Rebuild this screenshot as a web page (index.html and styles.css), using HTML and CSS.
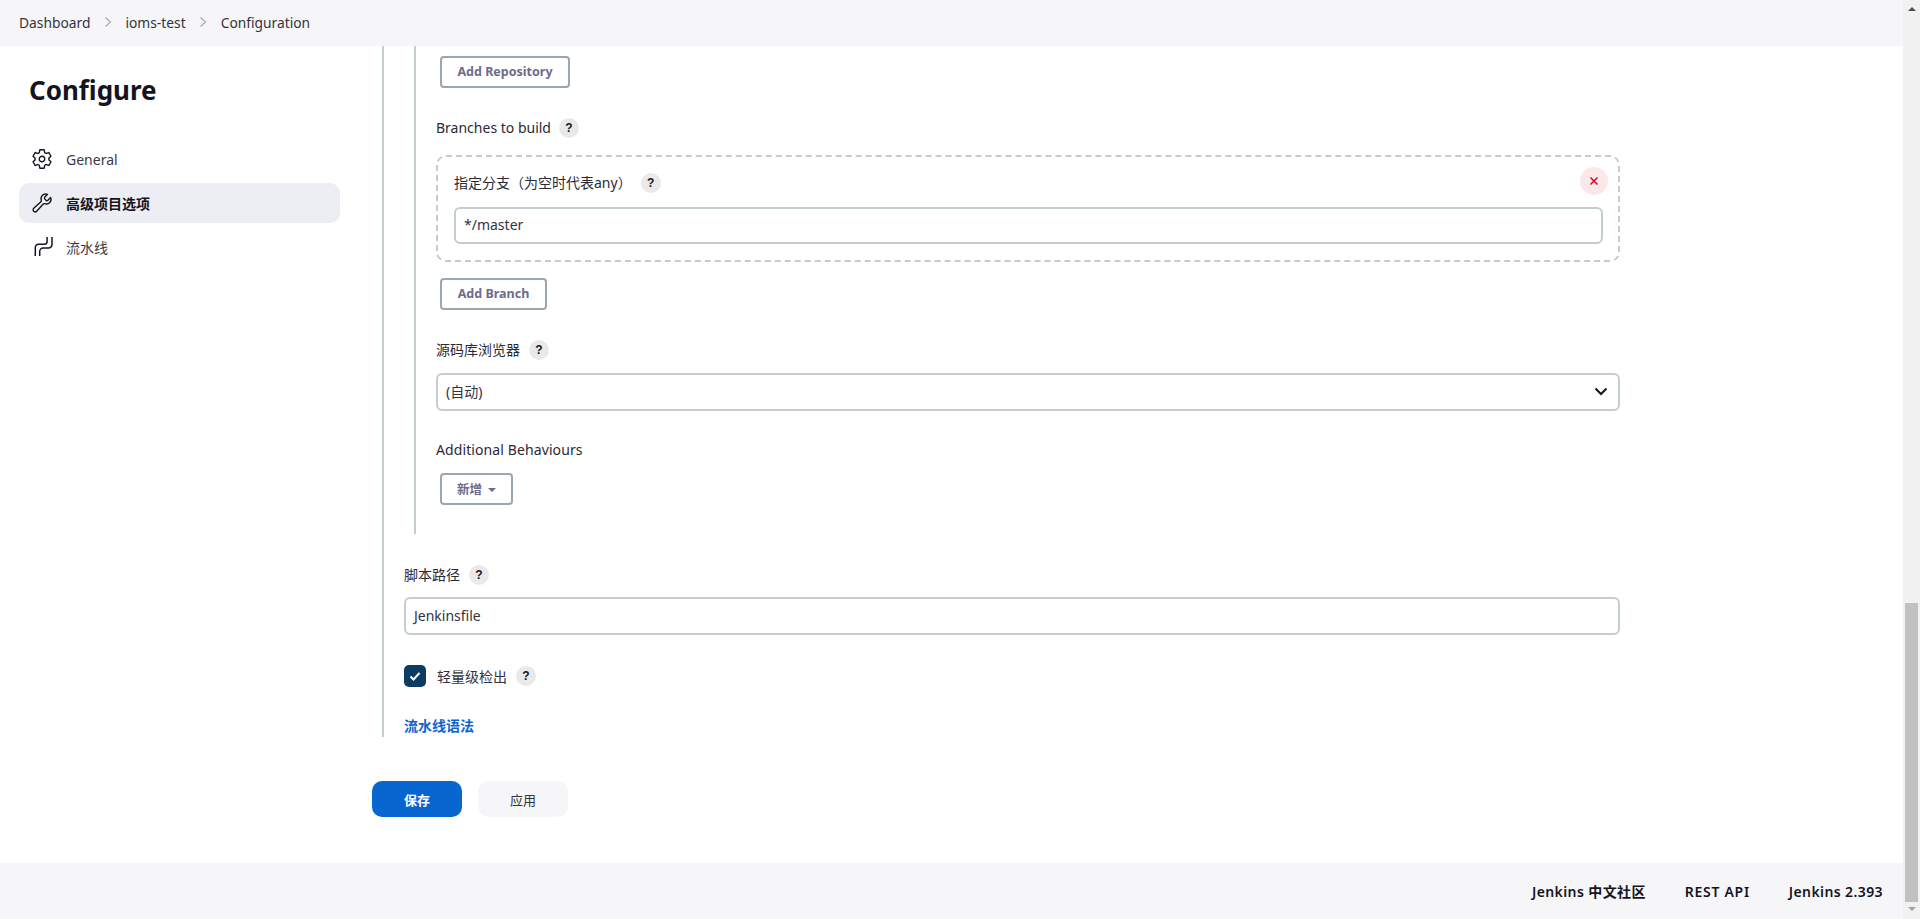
FILE: index.html
```html
<!DOCTYPE html>
<html lang="zh">
<head>
<meta charset="utf-8">
<title>Configuration</title>
<link rel="stylesheet" href="styles.css">
</head>
<body>
<div class="viewport">
  <div class="page">
    <nav class="crumbs">
      <a>Dashboard</a>
      <svg class="sep" viewBox="0 0 8 12"><path d="M1.5 1.5 6.5 6l-5 4.500"/></svg>
      <a>ioms-test</a>
      <svg class="sep" viewBox="0 0 8 12"><path d="M1.5 1.5 6.5 6l-5 4.500"/></svg>
      <a>Configuration</a>
    </nav>
    <div class="layout">
      <aside class="side">
        <h1 class="side-title">Configure</h1>
        <ul class="side-list">
          <li class="side-item">
            <svg class="side-icon" viewBox="0 0 512 512"><path d="M262.29 192.31a64 64 0 1057.4 57.4 64.13 64.13 0 00-57.4-57.4zM416.39 256a154.34 154.34 0 01-1.53 20.79l45.21 35.46a10.81 10.81 0 012.45 13.75l-42.77 74a10.81 10.81 0 01-13.14 4.59l-44.9-18.08a16.11 16.11 0 00-15.17 1.75A164.48 164.48 0 01325 400.8a15.94 15.94 0 00-8.82 12.14l-6.73 47.89a11.08 11.08 0 01-10.68 9.17h-85.54a11.11 11.11 0 01-10.69-8.87l-6.72-47.82a16.07 16.07 0 00-9-12.22 155.3 155.3 0 01-21.46-12.57 16 16 0 00-15.11-1.71l-44.89 18.07a10.81 10.81 0 01-13.14-4.58l-42.77-74a10.8 10.8 0 012.45-13.75l38.21-30a16.05 16.05 0 006-14.08c-.36-4.17-.58-8.33-.58-12.5s.21-8.27.58-12.35a16 16 0 00-6.07-13.94l-38.19-30A10.81 10.81 0 0149.48 186l42.77-74a10.81 10.81 0 0113.14-4.59l44.9 18.08a16.11 16.11 0 0015.17-1.75A164.48 164.48 0 01187 111.2a15.94 15.94 0 008.82-12.14l6.73-47.89A11.08 11.08 0 01213.23 42h85.54a11.11 11.11 0 0110.69 8.87l6.72 47.82a16.07 16.07 0 009 12.22 155.3 155.3 0 0121.46 12.57 16 16 0 0015.11 1.71l44.89-18.07a10.81 10.81 0 0113.14 4.58l42.77 74a10.8 10.8 0 01-2.45 13.75l-38.21 30a16.05 16.05 0 00-6.05 14.08c.33 4.14.55 8.3.55 12.47z"/></svg>
            <span>General</span>
          </li>
          <li class="side-item active">
            <svg class="side-icon" viewBox="0 0 512 512"><path d="M393.87 190a32.1 32.1 0 01-45.25 0l-26.57-26.57a32.09 32.09 0 010-45.26L382.19 58a1 1 0 00-.3-1.64c-38.82-16.64-89.15-8.16-121.11 23.57-30.58 30.35-32.32 76-21.12 115.84a31.93 31.93 0 01-9.06 32.08L64 380a48.17 48.17 0 1068 68l153.86-167a31.93 31.93 0 0131.6-9.13c39.54 10.59 84.54 8.6 114.72-21.19 32.49-32 39.5-88.56 23.75-120.93a1 1 0 00-1.6-.26z"/></svg>
            <span>高级项目选项</span>
          </li>
          <li class="side-item">
            <svg class="side-icon pipe" viewBox="0 0 22 22"><path d="M4.300 20V11.500a3.200 3.200 0 0 1 3.200-3.200h5.800a2.800 2.800 0 0 0 2.800-2.800V1M8.700 20v-4.500a3.500 3.500 0 0 1 3.500-3.500h5.300a3.500 3.500 0 0 0 3.500-3.500V1"/></svg>
            <span>流水线</span>
          </li>
        </ul>
      </aside>
      <main class="main">
        <section class="outer">
          <div class="inner">
            <button class="btn-outline btn-repo">Add Repository</button>
            <div class="label label-branches"><span>Branches to build</span><i class="help">?</i></div>
            <div class="repeat">
              <button class="close" aria-label="close"><svg viewBox="0 0 10 10"><path d="M1.500 1.500l7 7M8.500 1.500l-7 7"/></svg></button>
              <div class="label label-inrepeat"><span>指定分支（为空时代表any）</span><i class="help">?</i></div>
              <div class="field">*/master</div>
            </div>
            <button class="btn-outline btn-branch">Add Branch</button>
            <div class="label label-browser"><span>源码库浏览器</span><i class="help">?</i></div>
            <div class="field field-select"><span>(自动)</span>
              <svg class="chev" viewBox="0 0 14 9"><path d="M1.500 1.500 7 7l5.500-5.500"/></svg>
            </div>
            <div class="label label-behav"><span>Additional Behaviours</span></div>
            <button class="btn-outline btn-add">新增<b class="caret"></b></button>
          </div>
          <div class="label label-script"><span>脚本路径</span><i class="help">?</i></div>
          <div class="field">Jenkinsfile</div>
          <div class="check-row">
            <span class="check"><svg viewBox="0 0 22 22"><path d="M6.500 11.500l3 3 6-6.500"/></svg></span>
            <span class="check-label">轻量级检出</span><i class="help">?</i>
          </div>
          <a class="syntax">流水线语法</a>
        </section>
        <div class="actions">
          <button class="btn btn-save">保存</button>
          <button class="btn btn-apply">应用</button>
        </div>
      </main>
    </div>
    <footer class="foot">
      <a>Jenkins 中文社区</a>
      <a class="rest">REST API</a>
      <a>Jenkins 2.393</a>
    </footer>
  </div>
  <div class="scrollbar">
    <b class="arrow up"></b>
    <div class="thumb"></div>
    <b class="arrow down"></b>
  </div>
</div>
</body>
</html>
```
FILE: styles.css
```css
* { box-sizing: border-box; }
html, body { margin: 0; height: 100%; overflow: hidden; background: #fff; }
body {
  font-family: "Noto Sans", "Noto Sans CJK SC", sans-serif;
  font-size: 14px;
  color: #14141f;
}
.viewport { display: flex; height: 919px; }
.page { flex: 1; display: flex; flex-direction: column; min-width: 0; }

.crumbs {
  height: 46px;
  flex: none;
  background: #f6f6f8;
  display: flex;
  align-items: center;
  padding: 0 0 2px 19px;
  font-size: 13.800px;
  color: #33333f;
}
.sep { width: 8px; height: 12px; margin: 0 13.500px; fill: none; stroke: #a9a9b2; stroke-width: 1.200; }

.layout { flex: 1; display: flex; min-height: 0; }
.side { width: 372px; flex: none; padding: 0 32px 0 19px; }
.side-title {
  margin: 26px 0 31px 10px;
  font-size: 26px;
  line-height: 36px;
  font-weight: 700;
  color: #14141f;
}
.side-list { list-style: none; margin: 0; padding: 0; display: flex; flex-direction: column; gap: 4px; }
.side-item {
  height: 40px;
  border-radius: 10px;
  display: flex;
  align-items: center;
  padding-left: 12px;
  gap: 13px;
  color: #3a3a48;
}
.side-item.active { background: #edeef3; font-weight: 700; color: #14141f; }
.side-icon { width: 22px; height: 22px; flex: none; fill: none; stroke: #14141f; stroke-width: 32; stroke-linecap: round; stroke-linejoin: round; }
.side-icon.pipe { stroke-width: 1.500; stroke-linecap: butt; }

.main { flex: 1; min-width: 0; }
.outer {
  width: 1238px;
  height: 691px;
  margin-left: 10px;
  border-left: 2px solid #c3ccd1;
  padding-left: 20px;
}
.inner {
  height: 488px;
  margin-left: 10px;
  border-left: 2px solid #c3ccd1;
  padding: 10px 0 0 20px;
}
.btn-outline {
  display: block;
  height: 32px;
  margin-left: 4px;
  padding: 0 0 2px;
  font: 700 12.500px "Noto Sans", "Noto Sans CJK SC", sans-serif;
  color: #6d6b8d;
  background: #fff;
  border: 2px solid #9aa7b0;
  border-radius: 4px;
}
.btn-repo { width: 130px; }
.btn-branch { width: 107px; margin-top: 16px; }
.btn-add { width: 73px; margin-top: 13px; }
.caret { display: inline-block; margin-left: 6px; border: 4px solid transparent; border-top: 4.500px solid #6d6b8d; border-bottom: 0; vertical-align: 2px; }

.label { display: flex; align-items: center; height: 20px; line-height: 20px; color: #2a2a36; }
.help {
  width: 20px; height: 20px; margin-left: 9px;
  flex: none;
  border-radius: 50%;
  background: #e9e9e9;
  color: #14141f;
  font: 700 12px/20px "Liberation Sans", sans-serif;
  text-align: center;
}
.label-branches { margin-top: 30px; }
.label-branches .help { margin-left: 8px; }
.repeat {
  position: relative;
  margin-top: 17px;
  height: 107px;
  border: 2px dashed #c3ccd1;
  border-radius: 10px;
  padding: 16px 15px 0 16px;
}
.repeat .field { margin-top: 14px; line-height: 32px; }
.close {
  position: absolute;
  top: 10px;
  right: 10px;
  width: 28px;
  height: 28px;
  padding: 9px;
  border: 0;
  border-radius: 50%;
  background: #fbe8ea;
}
.close svg { display: block; width: 10px; height: 10px; fill: none; stroke: #e6001f; stroke-width: 1.500; }
.field {
  height: 37px;
  margin-top: 13px;
  border: 2px solid #c3ccd1;
  border-radius: 6px;
  padding-left: 8px;
  line-height: 33px;
  color: #33333f;
  background: #fff;
}
.label-browser { margin-top: 30px; }
.field-select {
  height: 38px;
  margin-top: 13px;
  display: flex;
  align-items: center;
  justify-content: space-between;
  padding: 0 10px 1px 8px;
}
.chev { width: 14px; height: 9px; fill: none; stroke: #14141f; stroke-width: 2; }
.label-behav { margin-top: 29px; letter-spacing: 0.100px; }

.label-script { margin-top: 31px; }
.label-script + .field { height: 38px; margin-top: 12px; }
.check-row { display: flex; align-items: center; margin-top: 30px; height: 22px; }
.check {
  width: 22px; height: 22px;
  border-radius: 5px;
  background: #0b3d63;
  flex: none;
}
.check svg { display: block; width: 22px; height: 22px; fill: none; stroke: #fff; stroke-width: 2; }
.check-label { margin-left: 11px; color: #33333f; }
.syntax { display: block; margin-top: 29px; line-height: 20px; font-weight: 700; color: #0b65d0; }

.actions { display: flex; gap: 16px; margin-top: 44px; }
.btn {
  width: 90px; height: 36px;
  border: 0;
  border-radius: 10px;
  font: 400 13px "Noto Sans", "Noto Sans CJK SC", sans-serif;
}
.btn-save { background: #0866d0; color: #fff; font-weight: 700; }
.btn-apply { background: #f6f6f8; color: #33333f; }

.foot {
  height: 56px;
  flex: none;
  background: #f6f6f8;
  display: flex;
  justify-content: flex-end;
  align-items: center;
  gap: 39px;
  padding-right: 20px;
  font-weight: 600;
  letter-spacing: 0.400px;
  color: #14141f;
}
.foot .rest { letter-spacing: 0.700px; }

.scrollbar {
  width: 17px;
  flex: none;
  background: #f1f1f1;
  display: flex;
  flex-direction: column;
  align-items: center;
}
.arrow { flex: none; width: 0; height: 0; border: 4px solid transparent; }
.arrow.up { margin-top: 7px; border-bottom: 4px solid #505050; border-top: 0; }
.arrow.down { margin-top: 5px; border-top: 4px solid #a3a3a3; border-bottom: 0; }
.thumb { width: 13px; height: 299px; margin-top: 592px; background: #c1c1c1; }
```
